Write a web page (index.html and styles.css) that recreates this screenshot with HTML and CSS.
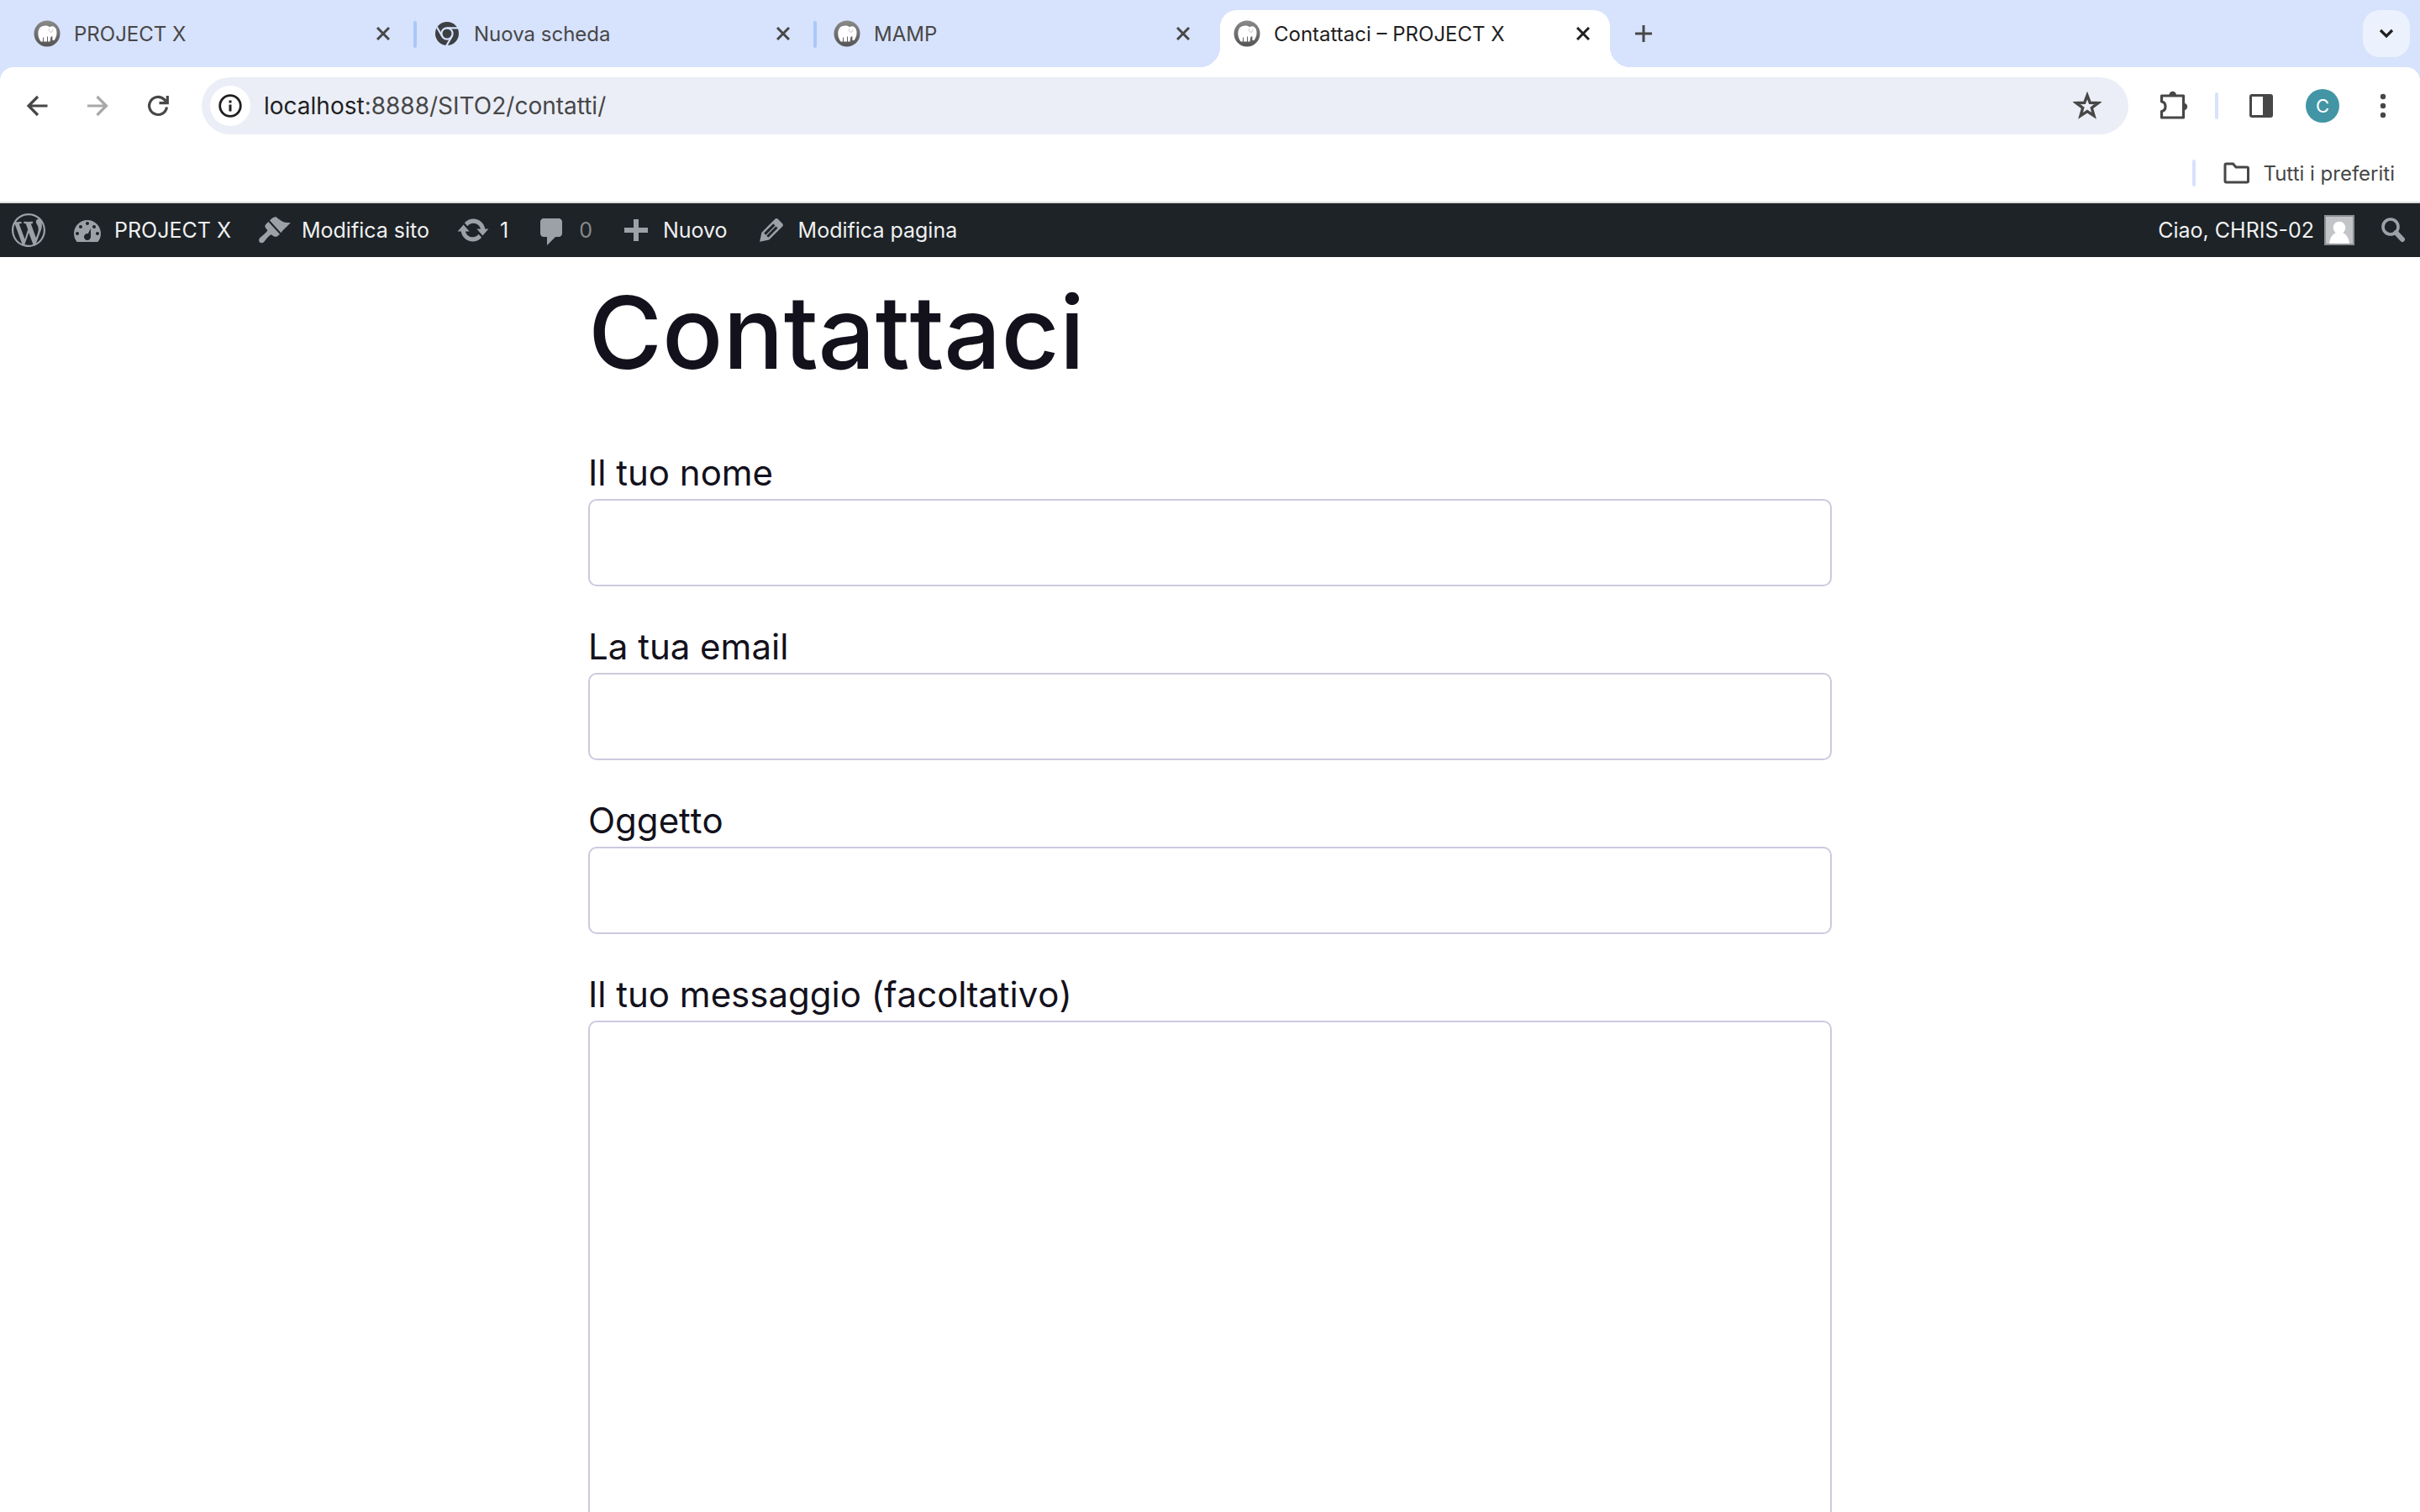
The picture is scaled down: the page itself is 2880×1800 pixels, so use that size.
FILE: index.html
```html
<!DOCTYPE html>
<html lang="it">
<head>
<meta charset="utf-8">
<title>Contattaci – PROJECT X</title>
<link rel="stylesheet" href="styles.css">
</head>
<body>
<svg class="defs" aria-hidden="true">
  <symbol id="mamp" viewBox="0 0 32 32">
    <linearGradient id="ring" x1="0" y1="0" x2="0" y2="1"><stop offset="0" stop-color="#8a8a8a"/><stop offset="1" stop-color="#555"/></linearGradient>
    <circle cx="16" cy="16" r="15.500" fill="url(#ring)"/>
    <path fill="#fff" d="M7 23C4 17 5 9 10 7.300c4-1.500 7-1 9 1 4-2.500 7.500.2 8.200 3.700.8 4 .3 8-2.700 12h-2l-.2-5-2 1-.8 5.500H17V19.500h-1v6h-4v-5h-1v5H8.500z"/>
    <path fill="none" stroke="#bbb" stroke-width=".8" d="M18.500 10c-1 3 1 5 3.500 4l1-3"/>
  </symbol>
  <symbol id="close" viewBox="0 0 16 16"><path d="M1 1l14 14M15 1L1 15" fill="none" stroke="currentColor" stroke-width="3"/></symbol>
</svg>

<header class="browser">
  <nav class="tabs" aria-label="Schede">
    <div class="tab">
      <svg class="favicon"><use href="#mamp"/></svg>
      <span class="tab-title">PROJECT X</span>
      <button class="tab-close" aria-label="Chiudi"><svg><use href="#close"/></svg></button>
    </div>
    <div class="tab">
      <svg class="favicon" viewBox="0 0 32 32">
        <circle cx="16" cy="16" r="14" fill="#3c4043"/>
        <circle cx="16" cy="16" r="6.600" fill="none" stroke="#d7e2fc" stroke-width="2.200"/>
        <path d="M16 9.400H29M10.300 19.300L3.900 8.200M21.700 19.300L15.400 30.400" fill="none" stroke="#d7e2fc" stroke-width="2.200"/>
      </svg>
      <span class="tab-title">Nuova scheda</span>
      <button class="tab-close" aria-label="Chiudi"><svg><use href="#close"/></svg></button>
    </div>
    <div class="tab tab-last">
      <svg class="favicon"><use href="#mamp"/></svg>
      <span class="tab-title">MAMP</span>
      <button class="tab-close" aria-label="Chiudi"><svg><use href="#close"/></svg></button>
    </div>
    <div class="tab tab-active">
      <svg class="favicon"><use href="#mamp"/></svg>
      <span class="tab-title">Contattaci – PROJECT X</span>
      <button class="tab-close" aria-label="Chiudi"><svg><use href="#close"/></svg></button>
    </div>
    <button class="new-tab" aria-label="Nuova scheda"><svg viewBox="0 0 20 20"><path d="M10 0v20M0 10h20" fill="none" stroke="currentColor" stroke-width="3"/></svg></button>
    <button class="tab-search" aria-label="Cerca schede"><svg viewBox="0 0 18 12"><path d="M2 2l7 7 7-7" fill="none" stroke="currentColor" stroke-width="3.200"/></svg></button>
  </nav>

  <div class="toolbar">
    <div class="nav-buttons">
      <button class="icon-button" aria-label="Indietro"><svg viewBox="0 0 32 32"><path d="M28.500 16H6M17 5L6 16l11 11" fill="none" stroke="currentColor" stroke-width="3.200"/></svg></button>
      <button class="icon-button disabled" aria-label="Avanti"><svg viewBox="0 0 32 32"><path d="M4 16h22M15.500 5l11 11-11 11" fill="none" stroke="currentColor" stroke-width="3.200"/></svg></button>
      <button class="icon-button" aria-label="Ricarica"><svg viewBox="0 0 32 32"><path d="M26.500 17.500A10.500 10.500 0 1 1 23.500 8.500l3 3M27.300 4v8.700H17.500" fill="none" stroke="currentColor" stroke-width="3.200"/></svg></button>
    </div>
    <div class="omnibox">
      <button class="site-info" aria-label="Informazioni sul sito"><svg viewBox="0 0 28 28"><circle cx="14" cy="14" r="12.300" fill="none" stroke="currentColor" stroke-width="2.800"/><path d="M12.500 12.500h3v8h-3zM12.500 7.500h3v3h-3z" fill="currentColor"/></svg></button>
      <a class="url" href="#"><span class="host">localhost</span>:8888/SITO2/contatti/</a>
      <button class="star" aria-label="Aggiungi ai preferiti"><svg viewBox="0 0 34 34"><path d="M17 4.500l3.300 8.800 9.700.3-7.700 5.900 2.700 9.300-8-5.300-8 5.300 2.700-9.300L4 13.600l9.700-.3z" fill="none" stroke="currentColor" stroke-width="3.400"/></svg></button>
    </div>
    <div class="actions">
      <button class="puzzle" aria-label="Estensioni"><svg viewBox="0 0 36 36"><path d="M4.500 6h26v26h-26v-7.500c6-1 6-10.500 0-11.500z" fill="none" stroke="currentColor" stroke-width="3.200" stroke-linejoin="round"/><path d="M13.500 5a4.200 4.200 0 0 1 8.400 0zM31 14.800a4.200 4.200 0 0 1 0 8.400z" fill="currentColor"/></svg></button>
      <span class="divider"></span>
      <button class="side-panel" aria-label="Riquadro laterale"><svg viewBox="0 0 30 30"><rect x="2.500" y="2.500" width="25" height="25" rx="1.500" fill="none" stroke="currentColor" stroke-width="3"/><path d="M17 2h11v26H17z" fill="currentColor"/></svg></button>
      <button class="profile" aria-label="Profilo">C</button>
      <button class="menu" aria-label="Menu"><svg viewBox="0 0 8 30"><g fill="currentColor"><circle cx="4" cy="4" r="3.200"/><circle cx="4" cy="15" r="3.200"/><circle cx="4" cy="26" r="3.200"/></g></svg></button>
    </div>
  </div>

  <div class="bookmarks">
    <span class="divider"></span>
    <button class="all-bookmarks"><svg viewBox="0 0 34 28"><path d="M4.500 3h8l3.500 4h13q1.500 0 1.500 1.500v15q0 1.500-1.500 1.500h-24.500q-1.500 0-1.500-1.500v-19q0-1.500 1.500-1.500z" fill="none" stroke="currentColor" stroke-width="3"/></svg>Tutti i preferiti</button>
  </div>
</header>

<nav class="adminbar" aria-label="Barra degli strumenti">
  <a class="wp-logo" href="#" aria-label="WordPress"><svg viewBox="0 0 20 20"><path d="M20 10c0-5.510-4.490-10-10-10C4.480 0 0 4.490 0 10c0 5.520 4.480 10 10 10 5.510 0 10-4.480 10-10zM7.780 15.370L4.370 6.220c.55-.02 1.170-.08 1.170-.08.5-.06.440-1.130-.06-1.110 0 0-1.450.11-2.370.11-.18 0-.37 0-.58-.01C4.120 2.690 6.870 1.110 10 1.110c2.330 0 4.450.87 6.050 2.340-.68-.11-1.650.39-1.650 1.580 0 .74.450 1.360.9 2.100.350.610.550 1.360.550 2.460 0 1.490-1.400 5-1.400 5l-3.030-8.370c.54-.02.82-.17.82-.17.5-.05.440-1.250-.06-1.220 0 0-1.440.12-2.380.12-.87 0-2.330-.12-2.330-.12-.5-.03-.56 1.200-.06 1.220l.92.08 1.260 3.410zM17.410 10c.240-.64.740-1.870.430-4.250.7 1.290 1.050 2.710 1.050 4.250 0 3.290-1.730 6.240-4.400 7.780.97-2.590 1.940-5.200 2.920-7.780zM6.100 18.090C3.120 16.650 1.110 13.530 1.110 10c0-1.300.23-2.480.72-3.590C3.250 10.300 4.670 14.200 6.100 18.090zm4.030-6.630l2.580 6.980c-.86.290-1.760.450-2.710.450-.79 0-1.570-.11-2.290-.33.810-2.380 1.620-4.740 2.420-7.100z" fill="currentColor"/></svg></a>
  <a class="item" href="#"><svg viewBox="0 0 20 20"><path fill-rule="evenodd" d="M3.760 17h12.480c1.100-1.370 1.760-3.110 1.760-5 0-4.420-3.580-8-8-8s-8 3.580-8 8c0 1.890.660 3.630 1.760 5zM10 5c.55 0 1 .45 1 1s-.45 1-1 1-1-.45-1-1 .45-1 1-1zM6 7c.55 0 1 .45 1 1s-.45 1-1 1-1-.45-1-1 .45-1 1-1zm8 0c.55 0 1 .45 1 1s-.45 1-1 1-1-.45-1-1 .45-1 1-1zm-3.630 5.100l1.630-3.100v5c0 1.100-.9 2-2 2s-2-.9-2-2c0-.96.690-1.780 1.630-1.960zM4 11c.55 0 1 .45 1 1s-.45 1-1 1-1-.45-1-1 .45-1 1-1zm12 0c.55 0 1 .45 1 1s-.45 1-1 1-1-.45-1-1 .45-1 1-1z" fill="currentColor"/></svg>PROJECT X</a>
  <a class="item" href="#"><svg viewBox="0 0 20 20"><path d="M11 2.200C9.500 1.700 8 3 7 4.300l6.700 7.300C15.500 9 18 7.500 19.300 5.500 16.500 5.800 14 5 11 2.200zM6.200 5L4.600 6.600c-.8 1-.4 1.800 1 3.200C6 11.500.8 14 .6 15.600c-.3 2 1.800 2.600 3 1.400C5 15.300 6.500 13 8 12.600c1.500 1.400 2.800 1.600 3.600 1l1.400-1.200z" fill="currentColor"/></svg>Modifica sito</a>
  <a class="item" href="#"><svg viewBox="0 0 20 20"><path d="M10.200 3.280c3.530 0 6.430 2.610 6.920 6h2.080l-3.500 4-3.500-4h2.320c-.45-1.970-2.210-3.450-4.320-3.450-1.450 0-2.730.71-3.540 1.780L4.950 5.660C6.230 4.200 8.110 3.280 10.200 3.280zm-.4 13.440c-3.520 0-6.430-2.610-6.920-6H.800l3.500-4c1.170 1.330 2.330 2.670 3.500 4H5.480c.45 1.970 2.210 3.450 4.320 3.450 1.450 0 2.730-.71 3.540-1.780l1.710 1.950c-1.280 1.460-3.150 2.380-5.250 2.380z" fill="currentColor"/></svg>1</a>
  <a class="item" href="#"><svg viewBox="0 0 20 20"><path d="M5 2h9c1.100 0 2 .9 2 2v7c0 1.100-.9 2-2 2h-2l-5 5v-5H5c-1.100 0-2-.9-2-2V4c0-1.100.9-2 2-2z" fill="currentColor" transform="translate(0 1)"/></svg><span class="muted">0</span></a>
  <a class="item" href="#"><svg viewBox="0 0 20 20"><path d="M8.500 3.500h3v5H17v3h-5.500v5h-3v-5H3v-3h5.500z" fill="currentColor"/></svg>Nuovo</a>
  <a class="item" href="#"><svg viewBox="0 0 20 20"><path d="M13.890 3.390l2.710 2.720c.460.460.420 1.240.030 1.640l-8.010 8.020-5.560 1.160 1.160-5.580s7.600-7.630 7.990-8.030c.390-.390 1.220-.390 1.680.070zm-2.730 2.790l-5.590 5.610 1.110 1.110 5.540-5.650zm-2.970 8.230l5.580-5.600-1.070-1.080-5.590 5.600z" fill="currentColor"/></svg>Modifica pagina</a>
  <a class="account" href="#">Ciao, CHRIS-02<svg viewBox="0 0 36 36"><path d="M0 0h36v36H0z" fill="#8c8f94"/><path d="M2 2h32v32H2z" fill="#c3c4c7"/><circle cx="18" cy="15" r="7.300" fill="#fff"/><path d="M6 34c1-8 4-11 8-13h8c4 2 7 5 8 13z" fill="#fff"/></svg></a>
  <button class="search" aria-label="Cerca"><svg viewBox="0 0 30 32"><circle cx="12" cy="12" r="9" fill="none" stroke="currentColor" stroke-width="3.600"/><path d="M18.500 19l7.500 8" stroke="currentColor" stroke-width="6" stroke-linecap="round"/></svg></button>
</nav>

<main class="page">
  <h1>Contattaci</h1>
  <form>
    <div class="field"><label for="nome">Il tuo nome</label><input id="nome" type="text"></div>
    <div class="field"><label for="email">La tua email</label><input id="email" type="email"></div>
    <div class="field"><label for="oggetto">Oggetto</label><input id="oggetto" type="text"></div>
    <div class="field"><label for="messaggio">Il tuo messaggio (facoltativo)</label><textarea id="messaggio" rows="10"></textarea></div>
  </form>
</main>
</body>
</html>
```
FILE: styles.css
```css
* { box-sizing: border-box; }

html { overflow: hidden; }

body {
  margin: 0;
  height: 100vh;
  overflow: hidden;
  background: #fff;
  color: #13111c;
  font-family: Inter, "Liberation Sans", sans-serif;
}

svg { display: block; flex: none; }
.defs { position: absolute; width: 0; height: 0; }

a { color: inherit; text-decoration: none; }

button {
  display: flex;
  align-items: center;
  justify-content: center;
  padding: 0;
  border: 0;
  background: none;
  color: inherit;
  font: inherit;
}

/* Browser window */
.browser {
  color: #474747;
  background: #d7e2fc;
  border-bottom: 2px solid #dedede;
}

.tabs {
  display: flex;
  align-items: flex-end;
  height: 80px;
  padding: 0 12px 0 24px;
  font-size: 24px;
}

.tab {
  position: relative;
  display: flex;
  align-items: center;
  width: 476px;
  height: 80px;
  padding: 0 32px 0 16px;
}

.tab:not(.tab-last, .tab-active)::after {
  content: "";
  position: absolute;
  right: 4px;
  top: 25px;
  width: 4px;
  height: 32px;
  border-radius: 2px;
  background: #abc7f9;
}

.favicon { width: 32px; height: 32px; }
.tab-title { flex: 1; padding-left: 16px; white-space: nowrap; }
.tab-close { width: 24px; height: 32px; }
.tab-close svg { width: 16px; height: 16px; }

.tab-active {
  width: 464px;
  height: 68px;
  padding: 0 20px 12px 16px;
  border-radius: 20px 20px 0 0;
  background: #fff;
  color: #1f1f1f;
}

.tab-active::before,
.tab-active::after {
  content: "";
  position: absolute;
  bottom: 0;
  width: 24px;
  height: 24px;
}

.tab-active::before {
  right: 100%;
  background: radial-gradient(circle at 0 0, transparent 24px, #fff 24px);
}

.tab-active::after {
  left: 100%;
  background: radial-gradient(circle at 100% 0, transparent 24px, #fff 24px);
}

.new-tab { width: 80px; height: 80px; }
.new-tab svg { width: 20px; height: 20px; }

.tab-search {
  width: 56px;
  height: 56px;
  margin: 0 0 12px auto;
  border-radius: 20px;
  background: #ecf2fd;
  color: #1f1f1f;
}
.tab-search svg { width: 18px; height: 12px; }

.toolbar {
  display: flex;
  align-items: center;
  height: 92px;
  padding: 0 40px 0 28px;
  border-radius: 16px 16px 0 0;
  background: #fff;
}

.nav-buttons { display: flex; gap: 40px; width: 212px; }
.icon-button svg { width: 32px; height: 32px; }
.disabled { color: #a8a8a8; }

.omnibox {
  display: flex;
  flex: 1;
  align-items: center;
  height: 68px;
  padding: 0 32px 0 10px;
  border-radius: 34px;
  background: #ebeef7;
}

.site-info {
  width: 48px;
  height: 48px;
  border-radius: 50%;
  background: #fff;
  color: #1f1f1f;
}
.site-info svg { width: 28px; height: 28px; }

.url { flex: 1; padding-left: 16px; font-size: 28px; }
.host { color: #1f1f1f; }
.star svg { width: 34px; height: 34px; }

.actions { display: flex; align-items: center; padding-left: 35px; }
.puzzle svg { width: 36px; height: 36px; }
.side-panel svg { width: 30px; height: 30px; }
.menu svg { width: 8px; height: 30px; }

.divider {
  width: 4px;
  height: 32px;
  border-radius: 2px;
  background: #d7e2fc;
}

.actions .divider { margin: 0 36px 0 32px; }

.profile {
  width: 40px;
  height: 40px;
  margin: 0 48px 0 38px;
  border-radius: 50%;
  background: #4295a5;
  color: #fff;
  font-size: 22px;
}

.bookmarks {
  display: flex;
  align-items: center;
  justify-content: flex-end;
  gap: 32px;
  height: 68px;
  padding: 0 30px;
  background: #fff;
}

.all-bookmarks { gap: 14px; font-size: 24px; }
.all-bookmarks svg { width: 34px; height: 28px; }

/* WordPress admin bar */
.adminbar {
  display: flex;
  align-items: center;
  height: 64px;
  padding: 0 17px 0 14px;
  background: #1d2327;
  color: #f0f0f1;
  font-size: 25px;
}

.adminbar svg { color: #9ca1a7; }
.adminbar a { display: flex; align-items: center; }
.wp-logo svg { width: 40px; height: 40px; }
.item { gap: 12px; padding-left: 30px; white-space: nowrap; }
.item + .item { padding-left: 32px; }
.item svg { width: 40px; height: 40px; }
.muted { color: #85898d; }
.adminbar .account { gap: 12px; margin-left: auto; }
.account svg { width: 36px; height: 36px; }
.search { margin-left: 31px; }
.search svg { width: 30px; height: 32px; }

/* Contact page */
.page {
  max-width: 1480px;
  margin: 0 auto;
  padding-top: 16px;
  font-kerning: none;
}

h1 {
  margin: 0 0 70px;
  font-size: 120px;
  font-weight: 500;
  line-height: 148px;
}

.field { margin-bottom: 49px; }

label {
  display: block;
  padding-bottom: 9px;
  font-size: 42px;
  line-height: 45px;
}

input,
textarea {
  display: block;
  width: 100%;
  height: 104px;
  padding: 24px;
  border: 2px solid #cdc9df;
  border-radius: 10px;
  outline: 0;
  background: #fff;
  color: inherit;
  font: inherit;
  font-size: 42px;
}

textarea { height: 720px; resize: none; }
```
